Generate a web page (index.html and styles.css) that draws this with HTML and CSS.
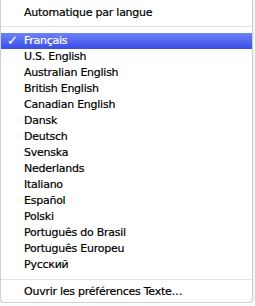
FILE: index.html
```html
<!DOCTYPE html>
<html lang="fr">
  <head>
    <meta charset="UTF-8" />
    <title>Langue</title>
    <link rel="stylesheet" href="styles.css">
  </head>
  <body>
    <div class="menu">
      <ul class="menu_list">
        <li class="item">Automatique par langue</li>
        <li class="sep"></li>
        <li class="item selected"><span class="check">&#10003;</span>Français</li>
        <li class="item">U.S. English</li>
        <li class="item">Australian English</li>
        <li class="item">British English</li>
        <li class="item">Canadian English</li>
        <li class="item">Dansk</li>
        <li class="item">Deutsch</li>
        <li class="item">Svenska</li>
        <li class="item">Nederlands</li>
        <li class="item">Italiano</li>
        <li class="item">Español</li>
        <li class="item">Polski</li>
        <li class="item">Português do Brasil</li>
        <li class="item">Português Europeu</li>
        <li class="item">Русский</li>
        <li class="sep sep_bottom"></li>
        <li class="item">Ouvrir les préférences Texte…</li>
      </ul>
    </div>
  </body>
</html>
```

FILE: styles.css
```css
* {
  margin: 0;
  padding: 0;
}
li {
  list-style: none;
}
body {
  background: #ffffff;
  font-family: "Lucida Grande", "DejaVu Sans", sans-serif;
}
.menu {
  width: 251px;
  height: 302px;
  background: #ffffff;
  border: 1px solid #cfcfcf;
  border-top: none;
  border-radius: 0 0 5px 5px;
  box-shadow: 0 1px 3px rgba(0, 0, 0, 0.18);
}
.menu_list {
  padding-top: 5px;
}
.menu_list .item {
  position: relative;
  height: 16px;
  line-height: 16px;
  padding-left: 23px;
  font-size: 11px;
  letter-spacing: -0.25px;
  color: #000000;
  -webkit-text-stroke: 0.2px #000000;
  white-space: nowrap;
}
.menu_list .item.selected {
  color: #ffffff;
  -webkit-text-stroke: 0.2px #ffffff;
  background: linear-gradient(#6d82f5, #3a4de7);
}
.menu_list .check {
  position: absolute;
  left: 6px;
  top: 0;
  font-size: 13px;
  font-weight: bold;
}
.menu_list .sep {
  height: 1px;
  margin: 5px 0 6px;
  background: #e2e2e2;
}
.menu_list .sep_bottom {
  margin: 6px 0 4px;
}
```
